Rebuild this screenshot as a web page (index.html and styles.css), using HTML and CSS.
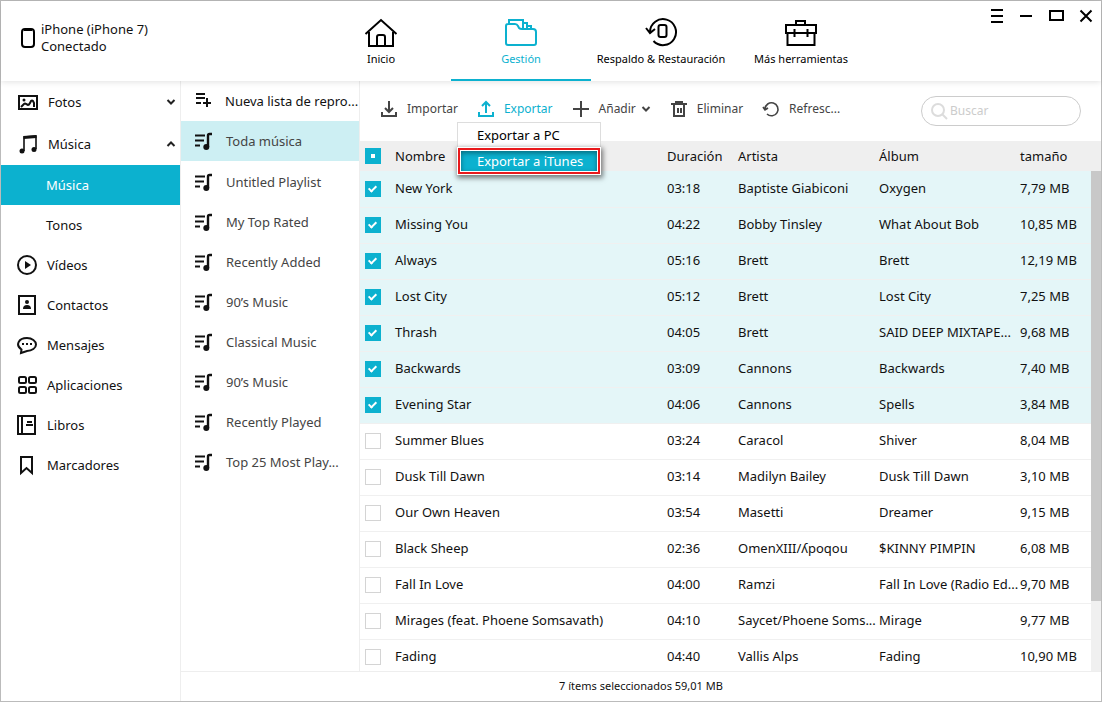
FILE: index.html
```html
<!DOCTYPE html>
<html lang="es">
<head>
    <meta charset="UTF-8">
    <meta name="viewport" content="width=device-width, initial-scale=1.0">
    <title>Gestión - Música</title>
    <link rel="stylesheet" href="styles.css">
</head>
<body>
    <!-- Iconos compartidos -->
    <svg class="sprites" aria-hidden="true">
        <symbol id="i-list" viewBox="0 -1 20 20">
            <path d="M1 3.5h10M1 8.5h9M1 13.5h5" stroke="currentColor" stroke-width="2" fill="none"/>
            <path d="M14 15V3.5q0-1.5 1.500-1.500H18" stroke="currentColor" stroke-width="2.4" fill="none"/>
            <circle cx="12.3" cy="15" r="3" fill="currentColor"/>
        </symbol>
    </svg>

    <div class="window">
        <header class="header">
            <div class="device">
                <svg width="16" height="22" viewBox="0 0 16 22"><rect x="2" y="2" width="12" height="18" rx="3" fill="none" stroke="#000" stroke-width="2"/><path d="M4 3h8" stroke="#000" stroke-width="2"/></svg>
                <div>iPhone (iPhone 7)<br>Conectado</div>
            </div>
            <nav class="tabs">
                <a href="#" class="tab">
                    <svg width="34" height="32" viewBox="0 0 34 32" fill="none" stroke="currentColor" stroke-width="2"><path d="M1.5 18L17 4l15.5 14M5 16v14h24V16M13 30v-9q0-2 2-2h4q2 0 2 2v9"/></svg>
                    Inicio
                </a>
                <a href="#" class="tab active">
                    <svg width="34" height="32" viewBox="0 0 34 32" fill="none" stroke="currentColor" stroke-width="2"><path d="M2 10q0-2 2-2h7q2 0 3 2l1 2q1 1 3 1h11q3 0 3 3v11q0 2-2 2H4q-2 0-2-2zM5 8V4h14v8M19 7h4v5M23 10h4v3"/></svg>
                    Gestión
                </a>
                <a href="#" class="tab">
                    <svg width="34" height="32" viewBox="0 0 34 32" fill="none" stroke="currentColor" stroke-width="2"><path d="M6 16A13 13 0 1 1 9.500 25M2 12l4 5 5-4"/><rect x="14.5" y="9" width="8" height="12" rx="2"/></svg>
                    Respaldo &amp; Restauración
                </a>
                <a href="#" class="tab">
                    <svg width="34" height="32" viewBox="0 0 34 32" fill="none" stroke="currentColor" stroke-width="2"><path d="M2 9h30v8H2zM3.5 17v12h27V17M12 9V5h9v4M10.5 13v8M23.5 13v8"/></svg>
                    Más herramientas
                </a>
            </nav>
            <div class="controls">
                <button aria-label="Menú"><svg width="14" height="16" viewBox="0 0 14 16"><path d="M1 2h12M1 8h12M1 14h12" stroke="#000" stroke-width="2"/></svg></button>
                <button aria-label="Minimizar"><svg width="14" height="16" viewBox="0 0 14 16"><path d="M1 8h12" stroke="#000" stroke-width="2"/></svg></button>
                <button aria-label="Maximizar"><svg width="16" height="16" viewBox="0 0 16 16"><rect x="2" y="3" width="13" height="9" fill="none" stroke="#000" stroke-width="2"/></svg></button>
                <button aria-label="Cerrar"><svg width="14" height="16" viewBox="0 0 14 16"><path d="M1.5 2.5l11 11M12.5 2.5l-11 11" stroke="#000" stroke-width="2"/></svg></button>
            </div>
        </header>

        <div class="content">
            <nav class="sidebar">
                <a href="#" class="group">
                    <svg width="22" height="22" viewBox="0 0 22 22" fill="none" stroke="currentColor" stroke-width="2"><rect x="3" y="5" width="18" height="13"/><path d="M5 16l3-3q1-1 2 0l2 1q1 0 2-2l1-2q1-1 2 0l1 2v4"/><circle cx="8" cy="9" r="1.5" fill="currentColor" stroke="none"/></svg>
                    Fotos
                    <svg class="arrow" width="10" height="8" viewBox="0 0 10 8"><path d="M1.5 2L5 5.5 8.5 2" fill="none" stroke="#222" stroke-width="2"/></svg>
                </a>
                <a href="#" class="group">
                    <svg width="22" height="22" viewBox="0 0 22 22" fill="none" stroke="currentColor"><path d="M8 18V4l12-1v13" stroke-width="1.6"/><path d="M7.500 4.500l13-1" stroke-width="3"/><circle cx="6" cy="18" r="2.500" fill="currentColor" stroke="none"/><circle cx="18" cy="16.500" r="2.500" fill="currentColor" stroke="none"/></svg>
                    Música
                    <svg class="arrow" width="10" height="8" viewBox="0 0 10 8"><path d="M1.5 6L5 2.5 8.5 6" fill="none" stroke="#222" stroke-width="2"/></svg>
                </a>
                <a href="#" class="sub selected">Música</a>
                <a href="#" class="sub">Tonos</a>
                <a href="#">
                    <svg width="22" height="22" viewBox="0 0 22 22"><circle cx="11" cy="11" r="9" fill="none" stroke="currentColor" stroke-width="2"/><path d="M9 7l6 4-6 4z" fill="currentColor"/></svg>
                    Vídeos
                </a>
                <a href="#">
                    <svg width="22" height="22" viewBox="0 0 22 22"><rect x="3" y="2" width="16" height="18" fill="none" stroke="currentColor" stroke-width="2"/><circle cx="11" cy="8" r="2" fill="currentColor"/><path d="M7 15q0-4 4-4t4 4z" fill="currentColor"/></svg>
                    Contactos
                </a>
                <a href="#">
                    <svg width="22" height="22" viewBox="0 0 22 22"><path d="M5.500 15.500C-1 11 2.500 4 11 4c5 0 9 3 9 6.500S16 17 11 17l-6 2z" fill="none" stroke="currentColor" stroke-width="2"/><path d="M6 10h2M10 10h2M14 10h2" stroke="currentColor" stroke-width="2"/></svg>
                    Mensajes
                </a>
                <a href="#">
                    <svg width="22" height="22" viewBox="0 0 22 22" fill="none" stroke="currentColor" stroke-width="2"><rect x="3" y="3" width="7" height="6" rx="1.5"/><rect x="13" y="3" width="7" height="6" rx="1.5"/><rect x="3" y="13" width="7" height="6" rx="1.5"/><rect x="13" y="13" width="7" height="6" rx="1.5"/></svg>
                    Aplicaciones
                </a>
                <a href="#">
                    <svg width="22" height="22" viewBox="0 0 22 22" fill="none" stroke="currentColor" stroke-width="2"><path d="M2 2h17v18H2zM6 2v18M10 11h7M11 8h5"/></svg>
                    Libros
                </a>
                <a href="#">
                    <svg width="22" height="22" viewBox="0 0 22 22" fill="none" stroke="currentColor" stroke-width="2"><path d="M5 3h11v16l-5.500-5L5 19z"/></svg>
                    Marcadores
                </a>
            </nav>

            <nav class="playlists">
                <a href="#" class="new">
                    <svg width="20" height="20" viewBox="0 0 20 20" fill="none" stroke="currentColor" stroke-width="2"><path d="M2 3h9M2 7h9M2 12h5M13 7v9M9 12h8"/></svg>
                    Nueva lista de repro...
                </a>
                <a href="#" class="selected"><svg width="20" height="20"><use href="#i-list"/></svg>Toda música</a>
                <a href="#"><svg width="20" height="20"><use href="#i-list"/></svg>Untitled Playlist</a>
                <a href="#"><svg width="20" height="20"><use href="#i-list"/></svg>My Top Rated</a>
                <a href="#"><svg width="20" height="20"><use href="#i-list"/></svg>Recently Added</a>
                <a href="#"><svg width="20" height="20"><use href="#i-list"/></svg>90’s Music</a>
                <a href="#"><svg width="20" height="20"><use href="#i-list"/></svg>Classical Music</a>
                <a href="#"><svg width="20" height="20"><use href="#i-list"/></svg>90’s Music</a>
                <a href="#"><svg width="20" height="20"><use href="#i-list"/></svg>Recently Played</a>
                <a href="#"><svg width="20" height="20"><use href="#i-list"/></svg>Top 25 Most Play...</a>
            </nav>

            <main class="main">
                <div class="toolbar">
                    <button>
                        <svg width="18" height="18" viewBox="0 0 18 18" fill="none" stroke="currentColor" stroke-width="2"><path d="M2 12v4h14v-4M9 1v11M5 8l4 4 4-4"/></svg>
                        Importar
                    </button>
                    <div class="dropdown">
                        <button class="open">
                            <svg width="18" height="18" viewBox="0 0 18 18" fill="none" stroke="currentColor" stroke-width="2"><path d="M2 12v4h14v-4M9 13V2M5 6l4-4 4 4"/></svg>
                            Exportar
                        </button>
                        <div class="menu">
                            <button>Exportar a PC</button>
                            <button class="highlight">Exportar a iTunes</button>
                        </div>
                    </div>
                    <button>
                        <svg width="18" height="18" viewBox="0 0 18 18"><path d="M9 1v16M1 9h16" stroke="currentColor" stroke-width="2"/></svg>
                        Añadir
                        <svg class="caret" width="10" height="8" viewBox="0 0 10 8"><path d="M1.5 2L5 5.5 8.5 2" fill="none" stroke="currentColor" stroke-width="2"/></svg>
                    </button>
                    <button>
                        <svg width="18" height="18" viewBox="0 0 18 18" fill="none" stroke="currentColor" stroke-width="2"><path d="M1 4h16M4 4v12h10V4M6 4V2h6v2M8 8v5M11 8v5"/></svg>
                        Eliminar
                    </button>
                    <button>
                        <svg width="18" height="18" viewBox="0 0 18 18" fill="none" stroke="currentColor" stroke-width="1.6"><path d="M3 9A6.500 6.500 0 1 1 5 14M1 7l2 3 3-2"/></svg>
                        Refresc...
                    </button>
                    <label class="search">
                        <svg width="18" height="18" viewBox="0 0 18 18" fill="none" stroke="#dcdcdc" stroke-width="2"><circle cx="8" cy="8" r="6"/><path d="M12 12l5 5"/></svg>
                        <input type="text" placeholder="Buscar" aria-label="Buscar">
                    </label>
                </div>

                <div class="songs">
                    <table>
                        <thead>
                            <tr>
                                <th class="c-check"><input type="checkbox" class="partial" aria-label="Seleccionar todo"></th>
                                <th>Nombre</th>
                                <th class="c-time">Duración</th>
                                <th class="c-text">Artista</th>
                                <th class="c-text">Álbum</th>
                                <th class="c-size">tamaño</th>
                            </tr>
                        </thead>
                        <tbody>
                            <tr class="on"><td><input type="checkbox" aria-label="New York" checked></td><td>New York</td><td>03:18</td><td>Baptiste Giabiconi</td><td>Oxygen</td><td>7,79 MB</td></tr>
                            <tr class="on"><td><input type="checkbox" aria-label="Missing You" checked></td><td>Missing You</td><td>04:22</td><td>Bobby Tinsley</td><td>What About Bob</td><td>10,85 MB</td></tr>
                            <tr class="on"><td><input type="checkbox" aria-label="Always" checked></td><td>Always</td><td>05:16</td><td>Brett</td><td>Brett</td><td>12,19 MB</td></tr>
                            <tr class="on"><td><input type="checkbox" aria-label="Lost City" checked></td><td>Lost City</td><td>05:12</td><td>Brett</td><td>Lost City</td><td>7,25 MB</td></tr>
                            <tr class="on"><td><input type="checkbox" aria-label="Thrash" checked></td><td>Thrash</td><td>04:05</td><td>Brett</td><td>SAID DEEP MIXTAPE...</td><td>9,68 MB</td></tr>
                            <tr class="on"><td><input type="checkbox" aria-label="Backwards" checked></td><td>Backwards</td><td>03:09</td><td>Cannons</td><td>Backwards</td><td>7,40 MB</td></tr>
                            <tr class="on"><td><input type="checkbox" aria-label="Evening Star" checked></td><td>Evening Star</td><td>04:06</td><td>Cannons</td><td>Spells</td><td>3,84 MB</td></tr>
                            <tr><td><input type="checkbox" aria-label="Summer Blues"></td><td>Summer Blues</td><td>03:24</td><td>Caracol</td><td>Shiver</td><td>8,04 MB</td></tr>
                            <tr><td><input type="checkbox" aria-label="Dusk Till Dawn"></td><td>Dusk Till Dawn</td><td>03:14</td><td>Madilyn Bailey</td><td>Dusk Till Dawn</td><td>3,10 MB</td></tr>
                            <tr><td><input type="checkbox" aria-label="Our Own Heaven"></td><td>Our Own Heaven</td><td>03:54</td><td>Masetti</td><td>Dreamer</td><td>9,15 MB</td></tr>
                            <tr><td><input type="checkbox" aria-label="Black Sheep"></td><td>Black Sheep</td><td>02:36</td><td>OmenXIII/ʎpoqou</td><td>$KINNY PIMPIN</td><td>6,08 MB</td></tr>
                            <tr><td><input type="checkbox" aria-label="Fall In Love"></td><td>Fall In Love</td><td>04:00</td><td>Ramzi</td><td>Fall In Love (Radio Ed...</td><td>9,70 MB</td></tr>
                            <tr><td><input type="checkbox" aria-label="Mirages"></td><td>Mirages (feat. Phoene Somsavath)</td><td>04:10</td><td>Saycet/Phoene Soms...</td><td>Mirage</td><td>9,77 MB</td></tr>
                            <tr><td><input type="checkbox" aria-label="Fading"></td><td>Fading</td><td>04:40</td><td>Vallis Alps</td><td>Fading</td><td>10,90 MB</td></tr>
                        </tbody>
                    </table>
                    <div class="scrollbar"><div class="thumb"></div></div>
                </div>
            </main>

            <footer class="status">7 ítems seleccionados 59,01 MB</footer>
        </div>
    </div>
</body>
</html>
```
FILE: styles.css
```css
* {
    box-sizing: border-box;
}

body {
    margin: 0;
    font-family: "Noto Sans", "Open Sans", sans-serif;
    font-size: 13px;
    line-height: 18px;
    color: #111;
    background-color: #fff;
}

a {
    color: inherit;
    text-decoration: none;
}

button {
    padding: 0;
    border: none;
    background: none;
    font: inherit;
    color: inherit;
    cursor: pointer;
}

svg {
    display: block;
    flex-shrink: 0;
}

.sprites {
    position: absolute;
    width: 0;
    height: 0;
}

.window {
    display: flex;
    flex-direction: column;
    height: 100vh;
    border: 1px solid #bbb;
}

/* Cabecera */
.header {
    display: flex;
    flex-shrink: 0;
    height: 80px;
    position: relative;
    box-shadow: 0 1px 6px rgba(0, 0, 0, 0.12);
}

.device {
    display: flex;
    align-items: center;
    gap: 5px;
    width: 310px;
    padding: 0 0 6px 19px;
    line-height: 17px;
}

.tabs {
    display: flex;
}

.tab {
    display: flex;
    flex-direction: column;
    align-items: center;
    gap: 2px;
    width: 140px;
    padding-top: 15px;
    font-size: 11px;
    white-space: nowrap;
    color: #000;
}

.tab.active {
    color: #0cb1cf;
    border-bottom: 2px solid #0cb1cf;
}

.controls {
    display: flex;
    align-items: flex-start;
    gap: 15px;
    margin-left: auto;
    padding: 7px 8px 0 0;
}

/* Columnas */
.content {
    display: grid;
    grid-template-columns: 180px 179px 1fr;
    grid-template-rows: minmax(0, 1fr) 30px;
    flex: 1;
    min-height: 0;
}

.sidebar {
    grid-row: 1 / 3;
    border-right: 1px solid #eee;
}

.sidebar a {
    display: flex;
    align-items: center;
    gap: 9px;
    height: 40px;
    padding: 0 4px 0 15px;
}

.sidebar .group {
    height: 42px;
    gap: 10px;
}

.sidebar .sub {
    padding-left: 45px;
}

.sidebar .selected {
    background-color: #0cb1cf;
    color: #fff;
}

.arrow {
    margin-left: auto;
}

.playlists {
    border-right: 1px solid #eee;
    color: #444;
    white-space: nowrap;
}

.playlists a {
    display: flex;
    align-items: center;
    gap: 12px;
    height: 40px;
    padding-left: 13px;
}

.playlists svg {
    color: #111;
}

.playlists .new {
    gap: 11px;
    color: #111;
}

.playlists .selected {
    margin-bottom: 1px;
    background-color: #cdeff3;
}

.main {
    display: flex;
    flex-direction: column;
    min-width: 0;
}

/* Barra de herramientas */
.toolbar {
    display: flex;
    align-items: center;
    gap: 19px;
    flex-shrink: 0;
    height: 60px;
    padding: 0 20px;
    font-size: 12px;
    color: #444;
}

.toolbar button {
    display: flex;
    align-items: center;
    gap: 9px;
    white-space: nowrap;
}

.toolbar > button,
.dropdown {
    margin-bottom: 4px;
}

.toolbar .open {
    color: #0cb1cf;
}

.toolbar .caret {
    margin-left: -4px;
}

.dropdown {
    position: relative;
}

.menu {
    position: absolute;
    top: 22px;
    left: -20px;
    z-index: 2;
    width: 144px;
    padding: 2px 3px;
    border: 1px solid #ddd;
    background-color: #fff;
    font-size: 13px;
    color: #000;
}

.toolbar .menu button {
    width: 100%;
    height: 20px;
    padding-left: 16px;
}

.toolbar .menu .highlight {
    margin-top: 6px;
    background-color: #0cb1cf;
    color: #fff;
    box-shadow: inset 0 2px 5px rgba(0, 0, 0, 0.4), 0 0 0 1px #fff, 0 0 0 3px #e8191c, 0 0 0 4px #fff, 1px 2px 5px 5px rgba(0, 0, 0, 0.5);
}

.search {
    display: flex;
    align-items: center;
    gap: 2px;
    width: 160px;
    height: 30px;
    margin-left: auto;
    padding: 0 8px;
    border: 1px solid #ccc;
    border-radius: 15px;
}

.search input {
    width: 100%;
    min-width: 0;
    padding: 0;
    border: none;
    outline: none;
    background: none;
    font: inherit;
}

.search input::placeholder {
    color: #ccc;
}

/* Lista de canciones */
.songs {
    flex: 1;
    min-height: 0;
    position: relative;
    overflow: hidden;
}

table {
    width: 100%;
    border-collapse: collapse;
    table-layout: fixed;
}

th,
td {
    padding: 0;
    text-align: left;
    font-weight: normal;
    white-space: nowrap;
}

th {
    height: 30px;
    background-color: #efefef;
}

td {
    height: 36px;
    padding-bottom: 2px;
    border-bottom: 1px solid #f0f0f0;
}

td:first-child {
    padding-bottom: 0;
}

.on td {
    background-color: #e4f6f8;
}

.c-check {
    width: 35px;
}

.c-time {
    width: 71px;
}

.c-text {
    width: 141px;
}

.c-size {
    width: 81px;
}

input[type="checkbox"] {
    display: block;
    appearance: none;
    position: relative;
    width: 16px;
    height: 16px;
    margin: 0 0 0 5px;
    border: 1px solid #d4d4d4;
    background-color: #fff;
}

input[type="checkbox"]:checked,
input.partial {
    border-color: #0cb1cf;
    background-color: #0cb1cf;
}

input[type="checkbox"]:checked::after {
    content: "";
    position: absolute;
    top: 2px;
    left: 4px;
    width: 3px;
    height: 6px;
    border: solid #fff;
    border-width: 0 2px 2px 0;
    transform: rotate(45deg);
}

input.partial::after {
    content: "";
    position: absolute;
    top: 5px;
    left: 5px;
    width: 4px;
    height: 4px;
    background-color: #fff;
}

.scrollbar {
    position: absolute;
    top: 30px;
    right: 0;
    bottom: 0;
    width: 10px;
    background-color: #f0f0f0;
}

.thumb {
    height: 86%;
    background-color: #c8c8c8;
}

.status {
    grid-column: 2 / 4;
    border-top: 1px solid #eee;
    font-size: 11px;
    line-height: 28px;
    text-align: center;
}
```
